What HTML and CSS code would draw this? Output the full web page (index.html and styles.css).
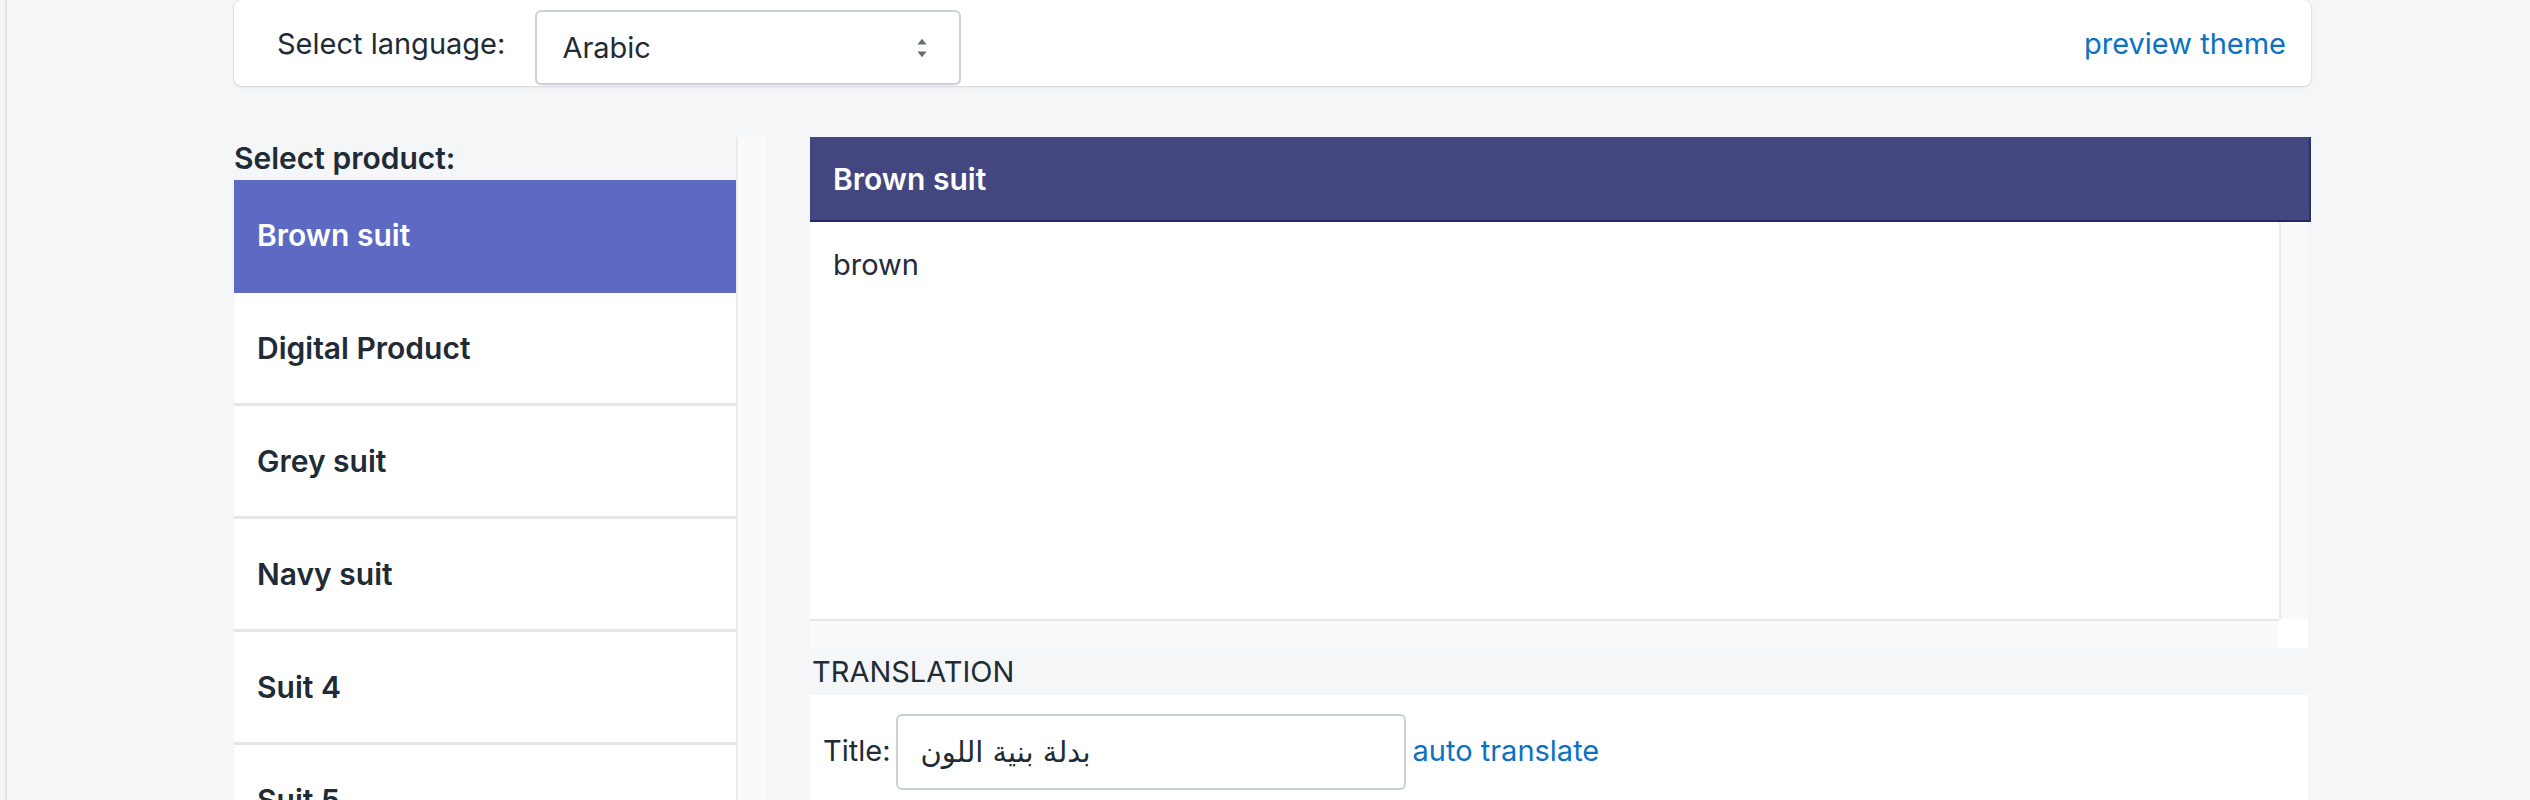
FILE: index.html
```html
<!DOCTYPE html>
<html lang="en">
<head>
<meta charset="utf-8">
<title>Translate products</title>
<link rel="stylesheet" href="styles.css">
</head>
<body>
<div class="frame">
  <div class="container">
    <div class="topbar">
      <div class="lang">
        <span class="lang-label">Select language:</span>
        <div class="select">
          <span class="select-value">Arabic</span>
          <svg class="select-arrows" width="10" height="20" viewBox="0 0 10 20"><path d="M0.5 6.5 L5 0.8 L9.5 6.5Z M0.5 13.5 L5 19.2 L9.5 13.5Z" fill="#5f6b77"/></svg>
        </div>
      </div>
      <a class="link preview">preview theme</a>
    </div>

    <div class="main">
      <div class="products">
        <div class="products-content">
          <div class="products-title">Select product:</div>
          <ul class="product-list">
            <li class="product active">Brown suit</li>
            <li class="product">Digital Product</li>
            <li class="product">Grey suit</li>
            <li class="product">Navy suit</li>
            <li class="product">Suit 4</li>
            <li class="product">Suit 5</li>
          </ul>
        </div>
        <div class="track track-v"></div>
      </div>

      <div class="detail">
        <div class="detail-header">Brown suit</div>
        <div class="editor">
          <div class="editor-body">brown</div>
          <div class="track track-v"></div>
          <div class="track track-h"></div>
          <div class="track-corner"></div>
        </div>
        <div class="section-label">TRANSLATION</div>
        <div class="translation-card">
          <div class="field-row">
            <span class="field-label">Title:</span>
            <div class="text-input" dir="ltr"><span dir="rtl">بدلة بنية اللون</span></div>
            <a class="link">auto translate</a>
          </div>
        </div>
      </div>
    </div>
  </div>
</div>
</body>
</html>
```
FILE: styles.css
```css
* { box-sizing: border-box; }

html, body {
  margin: 0;
  padding: 0;
  background: #f4f6f8;
  font-family: Inter, "Noto Sans", "DejaVu Sans", sans-serif;
  color: #212b36;
  font-size: 29px;
}

.frame {
  margin-left: 5px;
  border-left: 2px solid #e1e3e5;
  height: 800px;
  overflow: hidden;
}

.container {
  width: 2077px;
  margin-left: 227px;
}

/* top bar */
.topbar {
  height: 86px;
  background: #fff;
  border-radius: 8px;
  box-shadow: 0 0 0 1px rgba(63, 63, 68, 0.05), 0 1px 3px 0 rgba(63, 63, 68, 0.15);
  display: flex;
  align-items: center;
  justify-content: space-between;
  padding: 9px 25px 0 43px;
}

.lang {
  display: flex;
  align-items: center;
  gap: 30px;
}

.lang-label {
  font-size: 29px;
  margin-top: -8px;
}

.select {
  width: 426px;
  height: 75px;
  border: 2px solid #c9d0d6;
  border-radius: 6px;
  background: #fff;
  box-shadow: 0 1px 0 rgba(22, 29, 37, 0.05);
  display: flex;
  align-items: center;
  justify-content: space-between;
  padding: 0 32px 0 25px;
}

.select-value {
  font-size: 29px;
  color: #212b36;
}

.link {
  color: #0b72c3;
  font-size: 29px;
  text-decoration: none;
}

.preview {
  margin-top: -8px;
}

/* main */
.main {
  display: grid;
  grid-template-columns: 532px 1501px;
  column-gap: 44px;
  margin-top: 51px;
}

.products {
  display: grid;
  grid-template-columns: 502px 30px;
  height: 720px;
  overflow: hidden;
}

.track {
  background: #fafafa;
}
.track-v {
  border-left: 2px solid #ebebeb;
}
.track-h {
  border-top: 2px solid #e6e6e6;
}
.track-corner {
  background: #fff;
}

.products-title {
  height: 43px;
  font-weight: 600;
  font-size: 30px;
  line-height: 43px;
}

.product-list {
  list-style: none;
  margin: 0;
  padding: 0;
}

.product {
  height: 113px;
  display: flex;
  align-items: center;
  padding-left: 23px;
  background: #fff;
  border-bottom: 3px solid #e4e7ea;
  font-weight: 600;
  font-size: 30px;
}

.product.active {
  background: #5c6ac4;
  color: #fff;
  border-bottom-color: #5c6ac4;
}

/* detail */
.detail-header {
  height: 85px;
  background: #43467f;
  color: #fff;
  font-weight: 600;
  font-size: 30px;
  display: flex;
  align-items: center;
  padding-left: 23px;
  border-bottom: 2px solid #232866;
  border-right: 2px solid #2a2f6e;
}

.editor {
  height: 426px;
  margin-right: 3px;
  display: grid;
  grid-template-columns: 1fr 29px;
  grid-template-rows: 1fr 29px;
}

.editor-body {
  background: #fff;
  padding: 25px 23px;
  font-size: 29px;
  line-height: 36px;
}

.section-label {
  height: 47px;
  line-height: 47px;
  font-size: 29px;
  padding-left: 2px;
}

.translation-card {
  background: #fff;
  margin-right: 3px;
  padding: 19px 13px 24px;
  min-height: 200px;
}

.field-row {
  display: flex;
  align-items: center;
}

.field-label {
  font-size: 29px;
  margin-right: 5px;
  margin-top: -4px;
}

.text-input {
  width: 510px;
  height: 76px;
  border: 2px solid #c9d0d6;
  border-radius: 6px;
  display: flex;
  align-items: center;
  padding-left: 23px;
  font-family: "DejaVu Sans", sans-serif;
  font-size: 29px;
  margin-right: 7px;
}

.field-row .link {
  margin-top: -4px;
}
```
